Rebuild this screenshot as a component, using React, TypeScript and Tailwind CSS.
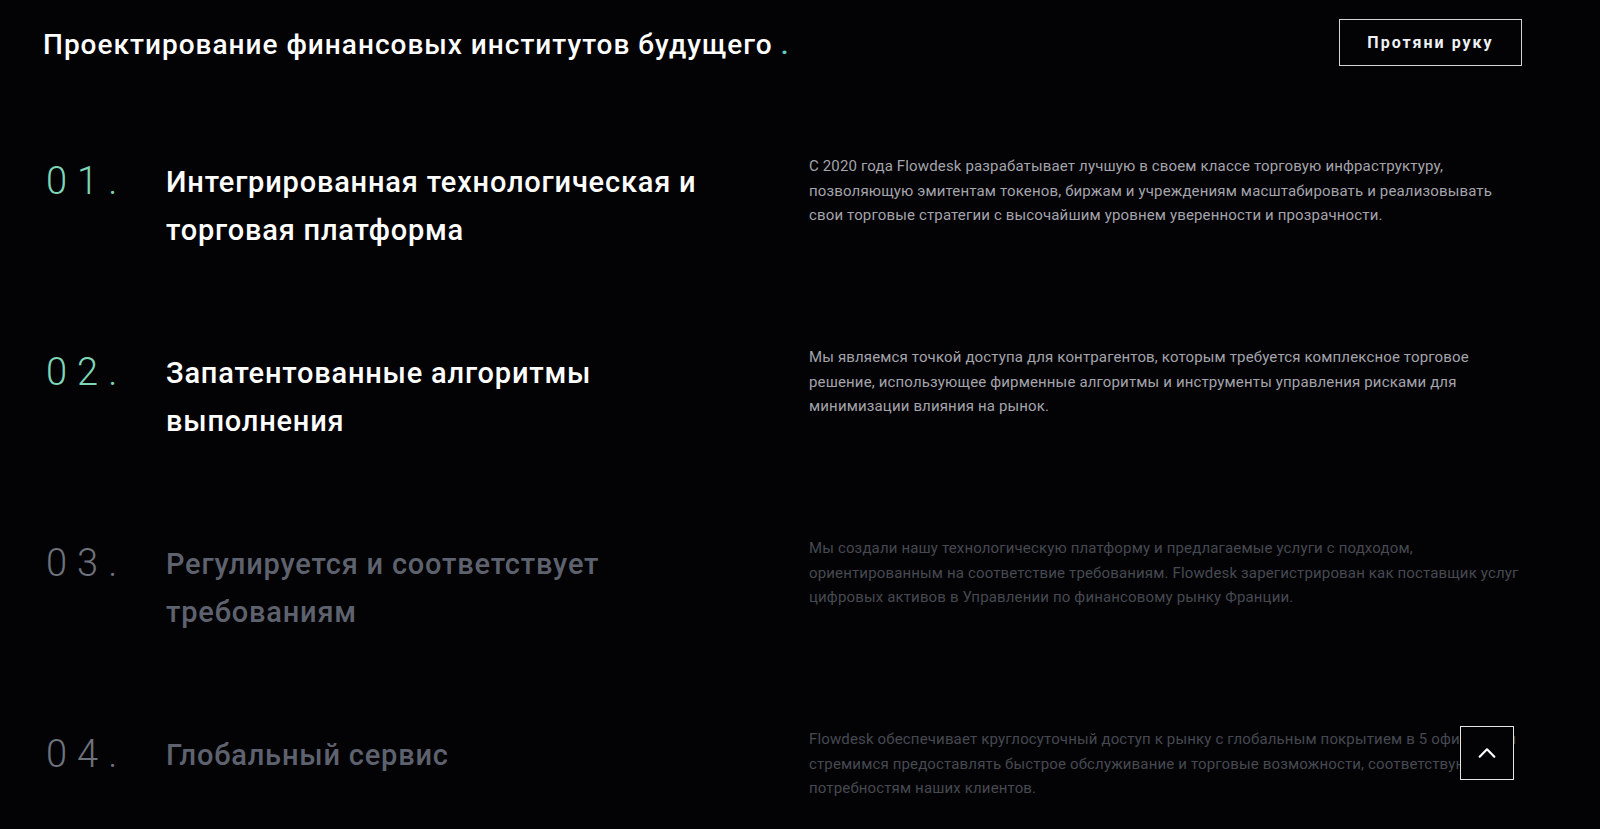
import React from 'react';

type Feature = {
  num: string;
  title: string;
  text: string;
  active: boolean;
};

const features: Feature[] = [
  {
    num: '01.',
    title: 'Интегрированная технологическая и торговая платформа',
    text: 'С 2020 года Flowdesk разрабатывает лучшую в своем классе торговую инфраструктуру, позволяющую эмитентам токенов, биржам и учреждениям масштабировать и реализовывать свои торговые стратегии с высочайшим уровнем уверенности и прозрачности.',
    active: true,
  },
  {
    num: '02.',
    title: 'Запатентованные алгоритмы выполнения',
    text: 'Мы являемся точкой доступа для контрагентов, которым требуется комплексное торговое решение, использующее фирменные алгоритмы и инструменты управления рисками для минимизации влияния на рынок.',
    active: true,
  },
  {
    num: '03.',
    title: 'Регулируется и соответствует требованиям',
    text: 'Мы создали нашу технологическую платформу и предлагаемые услуги с подходом, ориентированным на соответствие требованиям. Flowdesk зарегистрирован как поставщик услуг цифровых активов в Управлении по финансовому рынку Франции.',
    active: false,
  },
  {
    num: '04.',
    title: 'Глобальный сервис',
    text: 'Flowdesk обеспечивает круглосуточный доступ к рынку с глобальным покрытием в 5 офисах. Мы стремимся предоставлять быстрое обслуживание и торговые возможности, соответствующие потребностям наших клиентов.',
    active: false,
  },
];

const FeatureRow: React.FC<{ item: Feature }> = ({ item }) => (
  <div className="flex items-start">
    <div
      className={`w-[120px] shrink-0 mt-[4px] text-[38px] leading-[46px] font-light tracking-[10px] ${
        item.active ? 'text-[#7fd6b6]' : 'text-[#6e727c]'
      }`}
    >
      {item.num}
    </div>
    <h3
      className={`w-[643px] shrink-0 pr-[80px] mt-[4px] text-[29px] leading-[48px] font-medium tracking-[0.8px] ${
        item.active ? 'text-white' : 'text-[#5e626e]'
      }`}
    >
      {item.title}
    </h3>
    <p
      className={`w-[712px] text-[15px] leading-[24.5px] tracking-[0.15px] ${
        item.active ? 'text-[#a4a4ac]' : 'text-[#464951]'
      }`}
    >
      {item.text}
    </p>
  </div>
);

export default function App() {
  return (
    <div
      className="min-h-screen bg-[#030305] text-white overflow-hidden relative"
      style={{ fontFamily: 'Roboto, "Noto Sans", sans-serif' }}
    >
      <header className="flex items-center justify-between pl-[43px] pr-[78px] pt-[17px]">
        <h1 className="text-[28px] font-medium text-white leading-[47px] tracking-[1px] mt-[4px]">
          Проектирование финансовых институтов будущего <span className="text-[#62cfc3]">.</span>
        </h1>
        <button className="h-[47px] w-[183px] border-[1.5px] border-[#d4d4d4] text-[16px] font-bold tracking-[2px] text-[#eef2f5]">
          Протяни руку
        </button>
      </header>

      <main className="pl-[46px] pt-[86px] flex flex-col gap-[91px]">
        {features.map((f) => (
          <FeatureRow key={f.num} item={f} />
        ))}
      </main>

      <button className="fixed right-[86px] bottom-[49px] w-[54px] h-[54px] bg-[#030305] border border-[#e5e5e5] flex items-center justify-center">
        <svg width="22" height="22" viewBox="0 0 24 24" fill="none" stroke="white" strokeWidth="2.4" strokeLinecap="round" strokeLinejoin="round">
          <path d="M4 16l8-8 8 8" />
        </svg>
      </button>
    </div>
  );
}
